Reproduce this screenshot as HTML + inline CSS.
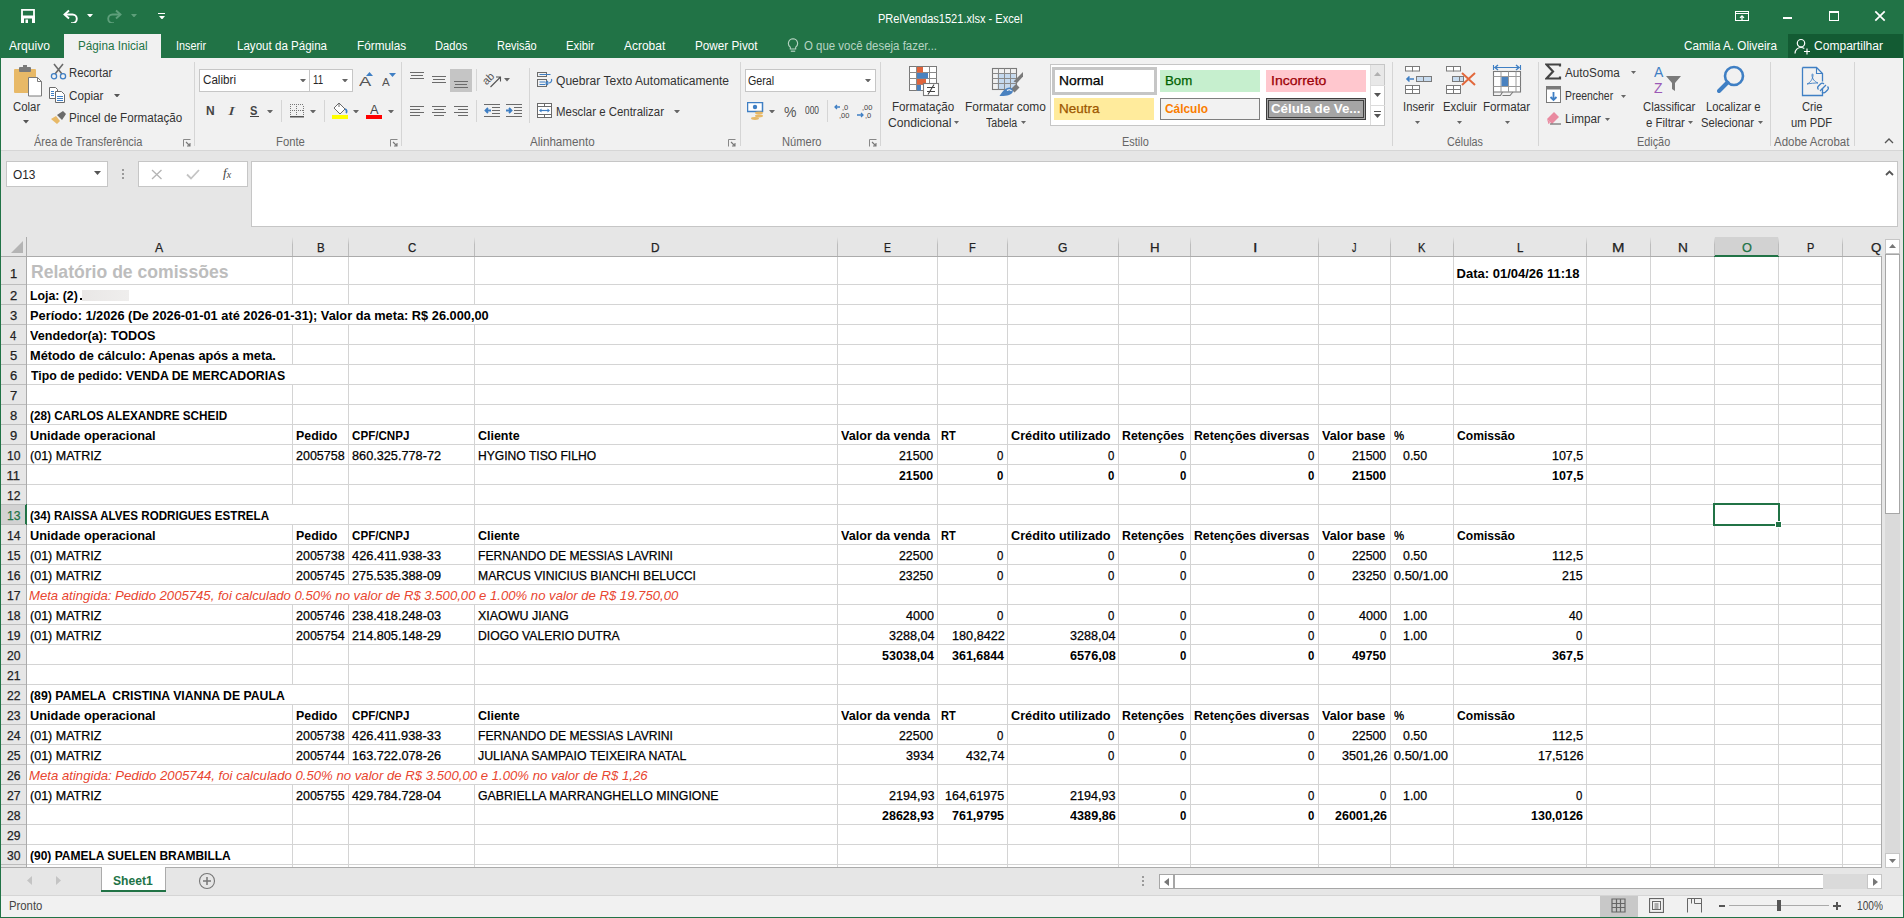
<!DOCTYPE html><html><head><meta charset="utf-8"><title>Excel</title><style>
html,body{margin:0;padding:0;width:1904px;height:918px;overflow:hidden;background:#fff;font-family:"Liberation Sans",sans-serif;}
.b{position:absolute;box-sizing:border-box;}
.t{position:absolute;white-space:pre;line-height:1;transform-origin:0 0;}
</style></head><body>
<div class="b" style="left:0px;top:0px;width:1904px;height:58px;background:#217346"></div>
<div class="t" style="left:878.00px;top:13px;font-size:12px;color:#fff;transform:scaleX(0.9210);">PRelVendas1521.xlsx - Excel</div>
<svg class="b" style="left:20px;top:8px" width="16" height="16" viewBox="0 0 16 16"><path d="M2 1.8h12v12.4H2z" fill="none" stroke="#fff" stroke-width="1.8"/><rect x="1" y="7.5" width="14" height="7.5" fill="#fff"/><rect x="4" y="10.5" width="8" height="4.5" fill="#217346"/><rect x="5.5" y="11.5" width="2.5" height="3.5" fill="#fff"/></svg>
<svg class="b" style="left:62px;top:8px" width="17" height="15" viewBox="0 0 17 15"><path d="M3.5 6.5h7a4.3 4.3 0 0 1 0 8.6H9" fill="none" stroke="#fff" stroke-width="1.9"/><path d="M7 2.5L2.5 6.5 7 10.5" fill="none" stroke="#fff" stroke-width="1.9"/></svg>
<svg class="b" style="left:86.5px;top:13.8px" width="6" height="3.5"><path d="M0 0H6L3.0 3.5z" fill="#fff"/></svg>
<svg class="b" style="left:106px;top:8px" width="17" height="15" viewBox="0 0 17 15"><path d="M13.5 6.5h-7a4.3 4.3 0 0 0 0 8.6H8" fill="none" stroke="#5e9f7b" stroke-width="1.9"/><path d="M10 2.5l4.5 4L10 10.5" fill="none" stroke="#5e9f7b" stroke-width="1.9"/></svg>
<svg class="b" style="left:130.5px;top:13.8px" width="6" height="3.5"><path d="M0 0H6L3.0 3.5z" fill="#5e9f7b"/></svg>
<div class="b" style="left:158px;top:13px;width:7px;height:1.2px;background:#fff"></div>
<svg class="b" style="left:158.5px;top:15.8px" width="6" height="3.5"><path d="M0 0H6L3.0 3.5z" fill="#fff"/></svg>
<svg class="b" style="left:1735px;top:11px" width="14" height="10" viewBox="0 0 14 10"><rect x="0.5" y="0.5" width="13" height="9" fill="none" stroke="#fff" stroke-width="1"/><path d="M0.5 2.5h13" stroke="#fff" stroke-width="1"/><path d="M7 9.5V5.2M5 6.8l2-2 2 2" fill="none" stroke="#fff" stroke-width="1.2"/></svg>
<div class="b" style="left:1783px;top:17px;width:9px;height:2px;background:#fff"></div>
<div class="b" style="left:1829px;top:11px;width:10px;height:10px;border:1px solid #fff;border-top-width:2px"></div>
<svg class="b" style="left:1874px;top:10px" width="12" height="12" viewBox="0 0 12 12"><path d="M1.3 1.3l9.4 9.4M10.7 1.3l-9.4 9.4" stroke="#fff" stroke-width="1.7"/></svg>
<div class="b" style="left:64px;top:34px;width:97px;height:24px;background:#f1f1f1"></div>
<div class="t" style="left:9.20px;top:40px;font-size:12.5px;color:#fff;transform:scaleX(0.9674);">Arquivo</div>
<div class="t" style="left:77.60px;top:40px;font-size:12.5px;color:#217346;transform:scaleX(0.9351);">Página Inicial</div>
<div class="t" style="left:176.00px;top:40px;font-size:12.5px;color:#fff;transform:scaleX(0.8657);">Inserir</div>
<div class="t" style="left:237.00px;top:40px;font-size:12.5px;color:#fff;transform:scaleX(0.9255);">Layout da Página</div>
<div class="t" style="left:357.00px;top:40px;font-size:12.5px;color:#fff;transform:scaleX(0.9423);">Fórmulas</div>
<div class="t" style="left:435.00px;top:40px;font-size:12.5px;color:#fff;transform:scaleX(0.8919);">Dados</div>
<div class="t" style="left:497.30px;top:40px;font-size:12.5px;color:#fff;transform:scaleX(0.8800);">Revisão</div>
<div class="t" style="left:565.90px;top:40px;font-size:12.5px;color:#fff;transform:scaleX(0.9062);">Exibir</div>
<div class="t" style="left:623.90px;top:40px;font-size:12.5px;color:#fff;transform:scaleX(0.9568);">Acrobat</div>
<div class="t" style="left:695.20px;top:40px;font-size:12.5px;color:#fff;transform:scaleX(0.9373);">Power Pivot</div>
<svg class="b" style="left:787px;top:38px" width="12" height="15" viewBox="0 0 12 15"><path d="M6 0.8a4.6 4.6 0 0 0-2.7 8.3V11h5.4V9.1A4.6 4.6 0 0 0 6 0.8z" fill="none" stroke="#b7d4c3" stroke-width="1.1"/><path d="M3.8 13.2h4.4" stroke="#b7d4c3" stroke-width="1.2"/></svg>
<div class="t" style="left:804.00px;top:40px;font-size:12.5px;color:#b7d4c3;transform:scaleX(0.9159);">O que você deseja fazer...</div>
<div class="t" style="left:1684.00px;top:40px;font-size:12.5px;color:#fff;transform:scaleX(0.9360);">Camila A. Oliveira</div>
<div class="b" style="left:1788px;top:34px;width:115px;height:24px;background:#135b33"></div>
<svg class="b" style="left:1794px;top:38px" width="17" height="17" viewBox="0 0 17 17"><circle cx="7" cy="5.2" r="3.7" fill="none" stroke="#fff" stroke-width="1.2"/><path d="M1 15.5c0-3.6 2.7-6 6-6 1.3 0 2.4.3 3.3.9" fill="none" stroke="#fff" stroke-width="1.2"/><path d="M13 10.5v6M10 13.5h6" stroke="#fff" stroke-width="1.2"/></svg>
<div class="t" style="left:1814.20px;top:40px;font-size:12.5px;color:#fff;transform:scaleX(0.9639);">Compartilhar</div>
<div class="b" style="left:0px;top:58px;width:1904px;height:92px;background:#f1f1f1;border-left:1px solid #217346;border-right:1px solid #217346"></div>
<div class="b" style="left:1px;top:150px;width:1902px;height:1px;background:#d6d6d6"></div>
<svg class="b" style="left:13px;top:65px" width="31" height="33" viewBox="0 0 31 33"><rect x="1" y="4" width="22" height="24" rx="1" fill="#e8b967"/><rect x="6" y="2" width="12" height="5" rx="1" fill="#7a7a7a"/><rect x="10" y="0" width="4" height="3" fill="#7a7a7a"/><path d="M15.5 12.5h9l4 4v14.5h-13z" fill="#fff" stroke="#7a7a7a" stroke-width="1"/><path d="M24.5 12.5v4h4" fill="none" stroke="#7a7a7a" stroke-width="1"/></svg>
<div class="t" style="left:12.50px;top:101px;font-size:12.5px;color:#333;transform:scaleX(0.9100);">Colar</div>
<svg class="b" style="left:22.5px;top:120.2px" width="6" height="3.5"><path d="M0 0H6L3.0 3.5z" fill="#555"/></svg>
<svg class="b" style="left:50px;top:63px" width="17" height="17" viewBox="0 0 17 17"><path d="M4 1l8 10M13 1L5 11" stroke="#6b6b6b" stroke-width="1.6"/><circle cx="4" cy="13.2" r="2.6" fill="none" stroke="#3f7fc4" stroke-width="1.3"/><circle cx="13" cy="13.2" r="2.6" fill="none" stroke="#3f7fc4" stroke-width="1.3"/></svg>
<div class="t" style="left:69.40px;top:67px;font-size:12.5px;color:#333;transform:scaleX(0.9021);">Recortar</div>
<svg class="b" style="left:49px;top:87px" width="17" height="16" viewBox="0 0 17 16"><path d="M0.5 0.5h6l2 2v9h-8z" fill="#fff" stroke="#6b6b6b" stroke-width="1"/><path d="M6.5 4.5h6l3 3v8h-9z" fill="#fff" stroke="#6b6b6b" stroke-width="1"/><rect x="2" y="4" width="3" height="1" fill="#3f7fc4"/><rect x="2" y="6" width="3" height="1" fill="#3f7fc4"/><rect x="2" y="8" width="3" height="1" fill="#3f7fc4"/><rect x="8" y="9" width="6" height="1" fill="#3f7fc4"/><rect x="8" y="11" width="6" height="1" fill="#3f7fc4"/><rect x="8" y="13" width="6" height="1" fill="#3f7fc4"/></svg>
<div class="t" style="left:69.40px;top:90px;font-size:12.5px;color:#333;transform:scaleX(0.9351);">Copiar</div>
<svg class="b" style="left:113.5px;top:93.8px" width="6" height="3.5"><path d="M0 0H6L3.0 3.5z" fill="#555"/></svg>
<svg class="b" style="left:50px;top:110px" width="17" height="15" viewBox="0 0 17 15"><path d="M1 9l5-3 4 5-3 3z" fill="#e8b967"/><path d="M7 5l6-4 3 3-4 6z" fill="#6b6b6b"/></svg>
<div class="t" style="left:69.40px;top:112px;font-size:12.5px;color:#333;transform:scaleX(0.9311);">Pincel de Formatação</div>
<div class="t" style="left:34.30px;top:136px;font-size:12.5px;color:#666;transform:scaleX(0.8815);">Área de Transferência</div>
<svg class="b" style="left:183px;top:139px" width="8" height="8" viewBox="0 0 8 8"><path d="M0.5 7.5V0.5h7" fill="none" stroke="#888" stroke-width="1"/><path d="M3 3l4 4M7 4v3H4" fill="none" stroke="#777" stroke-width="1.1"/></svg>
<div class="b" style="left:194px;top:62px;width:1px;height:84px;background:#d5d5d5"></div>
<div class="b" style="left:199px;top:69px;width:111px;height:23px;background:#fff;border:1px solid #c6c6c6"></div>
<div class="b" style="left:309px;top:69px;width:44px;height:23px;background:#fff;border:1px solid #c6c6c6"></div>
<div class="t" style="left:202.50px;top:74px;font-size:12.5px;color:#262626;transform:scaleX(0.9306);">Calibri</div>
<svg class="b" style="left:299.6px;top:78.8px" width="6" height="3.5"><path d="M0 0H6L3.0 3.5z" fill="#666"/></svg>
<div class="t" style="left:313.40px;top:74px;font-size:12.5px;color:#262626;transform:scaleX(0.7769);">11</div>
<svg class="b" style="left:342.4px;top:78.8px" width="6" height="3.5"><path d="M0 0H6L3.0 3.5z" fill="#666"/></svg>
<div class="t" style="left:359.30px;top:75px;font-size:13.01px;color:#555;transform:scaleX(1.4111);">A</div>
<svg class="b" style="left:366px;top:72px" width="7" height="4" viewBox="0 0 7 4"><path d="M0 4h7L3.5 0z" fill="#3f7fc4"/></svg>
<div class="t" style="left:382.40px;top:78px;font-size:10px;color:#555;transform:scaleX(1.1571);">A</div>
<svg class="b" style="left:389px;top:73px" width="7" height="4" viewBox="0 0 7 4"><path d="M0 0h7L3.5 4z" fill="#3f7fc4"/></svg>
<div class="t" style="left:205.60px;top:105px;font-size:12.5px;color:#444;font-weight:700;transform:scaleX(0.9556);">N</div>
<div class="t" style="left:228.00px;top:104px;font-size:13.5px;color:#444;font-style:italic;transform:scaleX(1.5000);font-family:'Liberation Serif';">I</div>
<div class="t" style="left:250.00px;top:105px;font-size:12.5px;color:#444;font-weight:700;transform:scaleX(0.8889);">S</div>
<div class="b" style="left:250px;top:116px;width:8.5px;height:1.2px;background:#444"></div>
<svg class="b" style="left:267.3px;top:109.5px" width="6" height="3.5"><path d="M0 0H6L3.0 3.5z" fill="#666"/></svg>
<div class="b" style="left:281px;top:100px;width:1px;height:22px;background:#d5d5d5"></div>
<svg class="b" style="left:290px;top:104px" width="14" height="14" viewBox="0 0 14 14"><rect x="0" y="0" width="1" height="1" fill="#777"/><rect x="0" y="6" width="1" height="1" fill="#777"/><rect x="2" y="0" width="1" height="1" fill="#777"/><rect x="2" y="6" width="1" height="1" fill="#777"/><rect x="4" y="0" width="1" height="1" fill="#777"/><rect x="4" y="6" width="1" height="1" fill="#777"/><rect x="6" y="0" width="1" height="1" fill="#777"/><rect x="6" y="6" width="1" height="1" fill="#777"/><rect x="8" y="0" width="1" height="1" fill="#777"/><rect x="8" y="6" width="1" height="1" fill="#777"/><rect x="10" y="0" width="1" height="1" fill="#777"/><rect x="10" y="6" width="1" height="1" fill="#777"/><rect x="12" y="0" width="1" height="1" fill="#777"/><rect x="12" y="6" width="1" height="1" fill="#777"/><rect x="0" y="2" width="1" height="1" fill="#777"/><rect x="0" y="4" width="1" height="1" fill="#777"/><rect x="0" y="6" width="1" height="1" fill="#777"/><rect x="0" y="8" width="1" height="1" fill="#777"/><rect x="0" y="10" width="1" height="1" fill="#777"/><rect x="6" y="2" width="1" height="1" fill="#777"/><rect x="6" y="4" width="1" height="1" fill="#777"/><rect x="6" y="6" width="1" height="1" fill="#777"/><rect x="6" y="8" width="1" height="1" fill="#777"/><rect x="6" y="10" width="1" height="1" fill="#777"/><rect x="13" y="2" width="1" height="1" fill="#777"/><rect x="13" y="4" width="1" height="1" fill="#777"/><rect x="13" y="6" width="1" height="1" fill="#777"/><rect x="13" y="8" width="1" height="1" fill="#777"/><rect x="13" y="10" width="1" height="1" fill="#777"/><rect x="0" y="12" width="14" height="1.5" fill="#555"/></svg>
<svg class="b" style="left:310.4px;top:109.5px" width="6" height="3.5"><path d="M0 0H6L3.0 3.5z" fill="#666"/></svg>
<div class="b" style="left:324px;top:100px;width:1px;height:22px;background:#d5d5d5"></div>
<svg class="b" style="left:331px;top:102px" width="17" height="13" viewBox="0 0 17 13"><path d="M3 6l5-5 6 6-5 5z" fill="#fff" stroke="#6b6b6b" stroke-width="1"/><path d="M8 1V5" stroke="#6b6b6b" stroke-width="1"/><path d="M14 7c2 1 2 3 1 4" fill="none" stroke="#3f7fc4" stroke-width="1.8"/></svg>
<div class="b" style="left:332px;top:115px;width:16px;height:4px;background:#ffff00"></div>
<svg class="b" style="left:353.4px;top:109.5px" width="6" height="3.5"><path d="M0 0H6L3.0 3.5z" fill="#666"/></svg>
<div class="t" style="left:369.70px;top:104px;font-size:12px;color:#444;transform:scaleX(1.0667);">A</div>
<div class="b" style="left:366px;top:115px;width:16px;height:4px;background:#ff0000"></div>
<svg class="b" style="left:387.5px;top:109.5px" width="6" height="3.5"><path d="M0 0H6L3.0 3.5z" fill="#666"/></svg>
<div class="t" style="left:275.50px;top:136px;font-size:12.5px;color:#666;transform:scaleX(0.9031);">Fonte</div>
<svg class="b" style="left:390px;top:139px" width="8" height="8" viewBox="0 0 8 8"><path d="M0.5 7.5V0.5h7" fill="none" stroke="#888" stroke-width="1"/><path d="M3 3l4 4M7 4v3H4" fill="none" stroke="#777" stroke-width="1.1"/></svg>
<div class="b" style="left:401px;top:62px;width:1px;height:84px;background:#d5d5d5"></div>
<svg class="b" style="left:410px;top:72px" width="14" height="7" viewBox="0 0 14 7"><rect x="0" y="0" width="14" height="1" fill="#6b6b6b"/><rect x="1" y="3" width="12" height="1" fill="#6b6b6b"/><rect x="0" y="6" width="14" height="1" fill="#6b6b6b"/></svg>
<svg class="b" style="left:432px;top:76px" width="14" height="7" viewBox="0 0 14 7"><rect x="0" y="0" width="14" height="1" fill="#6b6b6b"/><rect x="1" y="3" width="12" height="1" fill="#6b6b6b"/><rect x="0" y="6" width="14" height="1" fill="#6b6b6b"/></svg>
<div class="b" style="left:450px;top:69px;width:22px;height:23px;background:#c5c5c5"></div>
<svg class="b" style="left:454px;top:81px" width="14" height="7" viewBox="0 0 14 7"><rect x="0" y="0" width="14" height="1" fill="#6b6b6b"/><rect x="1" y="3" width="12" height="1" fill="#6b6b6b"/><rect x="0" y="6" width="14" height="1" fill="#6b6b6b"/></svg>
<div class="b" style="left:476px;top:69px;width:1px;height:22px;background:#d5d5d5"></div>
<svg class="b" style="left:483px;top:70px" width="19" height="19" viewBox="0 0 19 19"><text x="0" y="0" font-family="Liberation Sans" font-size="11" fill="#555" transform="translate(3.5 15.5) rotate(-45)">ab</text><path d="M7.5 17L17 7.5M13 7h4.5v4.5" fill="none" stroke="#555" stroke-width="1.1"/></svg>
<svg class="b" style="left:503.6px;top:78.2px" width="6" height="3.5"><path d="M0 0H6L3.0 3.5z" fill="#666"/></svg>
<div class="b" style="left:529px;top:68px;width:1px;height:55px;background:#d5d5d5"></div>
<svg class="b" style="left:537px;top:71px" width="16" height="17" viewBox="0 0 16 17"><rect x="0.5" y="1.5" width="9" height="4" fill="none" stroke="#6b6b6b"/><rect x="0.5" y="8.5" width="9" height="7" fill="none" stroke="#6b6b6b"/><path d="M2.5 3.5h11M2.5 11h6M2.5 13.5h6" stroke="#3f7fc4" stroke-width="1"/><path d="M14.5 8a3 3 0 0 1-3 4H9M11 10l-2 2 2 2" fill="none" stroke="#3f7fc4" stroke-width="1.2"/></svg>
<div class="t" style="left:556.00px;top:75px;font-size:12.5px;color:#333;transform:scaleX(0.9665);">Quebrar Texto Automaticamente</div>
<svg class="b" style="left:410px;top:106px" width="14" height="10" viewBox="0 0 14 10"><rect x="0" y="0" width="14" height="1" fill="#6b6b6b"/><rect x="0" y="3" width="10" height="1" fill="#6b6b6b"/><rect x="0" y="6" width="14" height="1" fill="#6b6b6b"/><rect x="0" y="9" width="10" height="1" fill="#6b6b6b"/></svg>
<svg class="b" style="left:432px;top:106px" width="14" height="10" viewBox="0 0 14 10"><rect x="0" y="0" width="14" height="1" fill="#6b6b6b"/><rect x="2" y="3" width="10" height="1" fill="#6b6b6b"/><rect x="0" y="6" width="14" height="1" fill="#6b6b6b"/><rect x="2" y="9" width="10" height="1" fill="#6b6b6b"/></svg>
<svg class="b" style="left:454px;top:106px" width="14" height="10" viewBox="0 0 14 10"><rect x="0" y="0" width="14" height="1" fill="#6b6b6b"/><rect x="4" y="3" width="10" height="1" fill="#6b6b6b"/><rect x="0" y="6" width="14" height="1" fill="#6b6b6b"/><rect x="4" y="9" width="10" height="1" fill="#6b6b6b"/></svg>
<div class="b" style="left:476px;top:100px;width:1px;height:22px;background:#d5d5d5"></div>
<svg class="b" style="left:484px;top:104px" width="16" height="13" viewBox="0 0 16 13"><rect x="0" y="0" width="16" height="1" fill="#6b6b6b"/><rect x="8" y="3" width="8" height="1" fill="#6b6b6b"/><rect x="8" y="6" width="8" height="1" fill="#6b6b6b"/><rect x="8" y="9" width="8" height="1" fill="#6b6b6b"/><rect x="0" y="12" width="16" height="1" fill="#6b6b6b"/><path d="M7 6.5H1.5M4 4L1.5 6.5 4 9" fill="none" stroke="#3f7fc4" stroke-width="1.8"/></svg>
<svg class="b" style="left:506px;top:104px" width="16" height="13" viewBox="0 0 16 13"><rect x="0" y="0" width="16" height="1" fill="#6b6b6b"/><rect x="8" y="3" width="8" height="1" fill="#6b6b6b"/><rect x="8" y="6" width="8" height="1" fill="#6b6b6b"/><rect x="8" y="9" width="8" height="1" fill="#6b6b6b"/><rect x="0" y="12" width="16" height="1" fill="#6b6b6b"/><path d="M0 6.5h5.5M3 4l2.5 2.5L3 9" fill="none" stroke="#3f7fc4" stroke-width="1.8"/></svg>
<svg class="b" style="left:537px;top:103px" width="15" height="15" viewBox="0 0 15 15"><rect x="0.5" y="0.5" width="14" height="14" fill="#fff" stroke="#6b6b6b"/><path d="M0.5 3.5h14M0.5 11.5h14M7.5 0.5v3M7.5 11.5v3" stroke="#6b6b6b"/><path d="M3 7.5h9" stroke="#3f7fc4" stroke-width="1.2"/><path d="M2 7.5l2.5-2v4zM13 7.5l-2.5-2v4z" fill="#3f7fc4"/></svg>
<div class="t" style="left:556.00px;top:106px;font-size:12.5px;color:#333;transform:scaleX(0.9143);">Mesclar e Centralizar</div>
<svg class="b" style="left:674.3px;top:109.5px" width="6" height="3.5"><path d="M0 0H6L3.0 3.5z" fill="#666"/></svg>
<div class="t" style="left:530.40px;top:136px;font-size:12.5px;color:#666;transform:scaleX(0.9300);">Alinhamento</div>
<svg class="b" style="left:728px;top:139px" width="8" height="8" viewBox="0 0 8 8"><path d="M0.5 7.5V0.5h7" fill="none" stroke="#888" stroke-width="1"/><path d="M3 3l4 4M7 4v3H4" fill="none" stroke="#777" stroke-width="1.1"/></svg>
<div class="b" style="left:740px;top:62px;width:1px;height:84px;background:#d5d5d5"></div>
<div class="b" style="left:745px;top:69px;width:131px;height:23px;background:#fff;border:1px solid #c6c6c6"></div>
<div class="t" style="left:748.00px;top:75px;font-size:12.5px;color:#262626;transform:scaleX(0.8548);">Geral</div>
<svg class="b" style="left:865.3px;top:78.8px" width="6" height="3.5"><path d="M0 0H6L3.0 3.5z" fill="#666"/></svg>
<svg class="b" style="left:747px;top:102px" width="18" height="18" viewBox="0 0 18 18"><rect x="0.5" y="0.5" width="15" height="9" fill="#fff" stroke="#3f7fc4" stroke-width="1.5"/><circle cx="8" cy="5" r="2.2" fill="#3f7fc4"/><ellipse cx="12" cy="11" rx="4" ry="1.4" fill="#e8b967"/><ellipse cx="12" cy="14" rx="4" ry="1.4" fill="#e8b967"/><ellipse cx="8" cy="16.5" rx="4" ry="1.4" fill="#e8b967"/></svg>
<svg class="b" style="left:769.4px;top:109.5px" width="6" height="3.5"><path d="M0 0H6L3.0 3.5z" fill="#666"/></svg>
<div class="t" style="left:784.00px;top:105px;font-size:14px;color:#555;">%</div>
<div class="t" style="left:804.80px;top:106px;font-size:10px;color:#444;transform:scaleX(0.8353);">000</div>
<div class="b" style="left:827px;top:100px;width:1px;height:22px;background:#d5d5d5"></div>
<svg class="b" style="left:834px;top:103px" width="17" height="16" viewBox="0 0 17 16"><text x="8" y="7" font-family="Liberation Sans" font-size="7.5" fill="#444">,0</text><text x="5" y="15" font-family="Liberation Sans" font-size="7.5" fill="#444">,00</text><path d="M6 4H1M3 2L1 4l2 2" fill="none" stroke="#3f7fc4" stroke-width="1.3"/></svg>
<svg class="b" style="left:856px;top:103px" width="17" height="16" viewBox="0 0 17 16"><text x="6" y="7" font-family="Liberation Sans" font-size="7.5" fill="#444">,00</text><text x="9" y="15" font-family="Liberation Sans" font-size="7.5" fill="#444">,0</text><path d="M1 12h6M5 10l2 2-2 2" fill="none" stroke="#3f7fc4" stroke-width="1.3"/></svg>
<div class="t" style="left:782.40px;top:136px;font-size:12.5px;color:#666;transform:scaleX(0.8889);">Número</div>
<svg class="b" style="left:869px;top:139px" width="8" height="8" viewBox="0 0 8 8"><path d="M0.5 7.5V0.5h7" fill="none" stroke="#888" stroke-width="1"/><path d="M3 3l4 4M7 4v3H4" fill="none" stroke="#777" stroke-width="1.1"/></svg>
<div class="b" style="left:880px;top:62px;width:1px;height:84px;background:#d5d5d5"></div>
<svg class="b" style="left:908px;top:65px" width="32" height="32" viewBox="0 0 32 32"><rect x="1.5" y="1.5" width="27" height="24" fill="#fff" stroke="#7a7a7a" stroke-width="1"/><path d="M1.5 7.5h27M1.5 13.5h27M1.5 19.5h27M8.5 1.5v24M21.5 1.5v24" stroke="#8a8a8a" stroke-width="1"/><rect x="9" y="2" width="6" height="5.5" fill="#e0643c"/><rect x="9" y="8" width="11" height="5.5" fill="#4a82c0"/><rect x="9" y="14" width="9" height="5.5" fill="#e0643c"/><rect x="9" y="20" width="4" height="5.5" fill="#4a82c0"/><rect x="15.5" y="18.5" width="15" height="12" fill="#fff" stroke="#7a7a7a" stroke-width="1.1"/><path d="M19 22.5h8M19 26.5h8M20 29.5L26 19.5" stroke="#444" stroke-width="1.1"/></svg>
<div class="t" style="left:892.20px;top:101px;font-size:12.5px;color:#333;transform:scaleX(0.9328);">Formatação</div>
<div class="t" style="left:887.50px;top:117px;font-size:12.5px;color:#333;transform:scaleX(0.9723);">Condicional</div>
<svg class="b" style="left:954.0px;top:121.0px" width="5" height="3.0"><path d="M0 0H5L2.5 3.0z" fill="#666"/></svg>
<svg class="b" style="left:991px;top:67px" width="35" height="31" viewBox="0 0 35 31"><rect x="6.5" y="6" width="18" height="16" fill="#c5d9ee"/><rect x="1.5" y="1.5" width="24" height="21" fill="none" stroke="#7a7a7a" stroke-width="1.1"/><path d="M1.5 6.5h24M1.5 11.5h24M1.5 16.5h24M7.5 1.5v21M13.5 1.5v21M19.5 1.5v21" stroke="#8a8a8a" stroke-width="1"/><path d="M20 22l5-5 3.5 3.5-5 5z" fill="#7a7a7a"/><path d="M26 16l6-6.5V5l-9.5 9.5z" fill="#7a7a7a"/><path d="M8.5 29c3-5 6-8 10-8.5 2.5 0 4 2.5 3 5-1.5 3-8 3.5-13 3.5z" fill="#4a82c0"/><path d="M16 23.5c1.5-1 3.5-1 4.5 0.5" fill="none" stroke="#fff" stroke-width="1.2"/></svg>
<div class="t" style="left:964.50px;top:101px;font-size:12.5px;color:#333;transform:scaleX(0.9541);">Formatar como</div>
<div class="t" style="left:985.50px;top:117px;font-size:12.5px;color:#333;transform:scaleX(0.8474);">Tabela</div>
<svg class="b" style="left:1021.3px;top:121.0px" width="5" height="3.0"><path d="M0 0H5L2.5 3.0z" fill="#666"/></svg>
<div class="b" style="left:1050px;top:64px;width:335px;height:62px;background:#fff;border:1px solid #c6c6c6"></div>
<div class="b" style="left:1370px;top:65px;width:14px;height:60px;background:#fff;border-left:1px solid #dcdcdc"></div>
<div class="b" style="left:1371px;top:65px;width:13px;height:20px;background:#e8e8e8"></div>
<div class="b" style="left:1370px;top:85px;width:15px;height:1px;background:#dcdcdc"></div>
<div class="b" style="left:1370px;top:105px;width:15px;height:1px;background:#dcdcdc"></div>
<svg class="b" style="left:1374px;top:72px" width="7" height="4" viewBox="0 0 7 4"><path d="M0 4h7L3.5 0z" fill="#b0b0b0"/></svg>
<svg class="b" style="left:1374px;top:93px" width="7" height="4" viewBox="0 0 7 4"><path d="M0 0h7L3.5 4z" fill="#555"/></svg>
<svg class="b" style="left:1374px;top:111px" width="7" height="7" viewBox="0 0 7 7"><path d="M0 0.5h7" stroke="#555"/><path d="M0 3h7L3.5 7z" fill="#555"/></svg>
<div class="b" style="left:1052px;top:67px;width:105px;height:28px;background:#fff;border:3px solid #c6c6c6"></div>
<div class="t" style="left:1058.70px;top:74px;font-size:13px;color:#000;-webkit-text-stroke:0.25px #000;transform:scaleX(1.0619);">Normal</div>
<div class="b" style="left:1160px;top:70px;width:100px;height:22px;background:#c6efce"></div>
<div class="t" style="left:1164.50px;top:74px;font-size:13px;color:#006100;-webkit-text-stroke:0.25px #006100;transform:scaleX(1.0185);">Bom</div>
<div class="b" style="left:1266px;top:70px;width:100px;height:22px;background:#ffc7ce"></div>
<div class="t" style="left:1270.50px;top:74px;font-size:13px;color:#9c0006;-webkit-text-stroke:0.25px #9c0006;transform:scaleX(1.0784);">Incorreto</div>
<div class="b" style="left:1054px;top:98px;width:100px;height:22px;background:#ffeb9c"></div>
<div class="t" style="left:1058.70px;top:102px;font-size:13px;color:#9c5700;-webkit-text-stroke:0.25px #9c5700;transform:scaleX(1.0375);">Neutra</div>
<div class="b" style="left:1160px;top:98px;width:100px;height:22px;background:#f2f2f2;border:1px solid #7f7f7f"></div>
<div class="t" style="left:1164.50px;top:102px;font-size:13px;color:#fa7d00;font-weight:700;transform:scaleX(0.9149);">Cálculo</div>
<div class="b" style="left:1266px;top:98px;width:100px;height:22px;background:#a5a5a5;border:3px double #3f3f3f"></div>
<div class="t" style="left:1270.50px;top:102px;font-size:13px;color:#fff;font-weight:700;transform:scaleX(1.0230);">Célula de Ve...</div>
<div class="t" style="left:1122.20px;top:136px;font-size:12.5px;color:#666;transform:scaleX(0.8742);">Estilo</div>
<div class="b" style="left:1392px;top:62px;width:1px;height:84px;background:#d5d5d5"></div>
<svg class="b" style="left:1405px;top:66px" width="28" height="29" viewBox="0 0 28 29"><g fill="#fff" stroke="#7a7a7a"><rect x="0.5" y="0.5" width="7" height="4.5"/><rect x="7.5" y="0.5" width="7" height="4.5"/><rect x="0.5" y="19.5" width="7" height="4"/><rect x="7.5" y="19.5" width="7" height="4"/><rect x="0.5" y="23.5" width="7" height="4"/><rect x="7.5" y="23.5" width="7" height="4"/></g><g fill="#c8dcf0" stroke="#7a7a7a"><rect x="11.5" y="10.5" width="7" height="5"/><rect x="18.5" y="10.5" width="8" height="5"/></g><path d="M9 13H2M4.5 10.5L2 13l2.5 2.5" fill="none" stroke="#3f7fc4" stroke-width="1.6"/></svg>
<div class="t" style="left:1402.50px;top:101px;font-size:12.5px;color:#333;transform:scaleX(0.9000);">Inserir</div>
<svg class="b" style="left:1414.9px;top:121.0px" width="5" height="3.0"><path d="M0 0H5L2.5 3.0z" fill="#666"/></svg>
<svg class="b" style="left:1446px;top:66px" width="31" height="29" viewBox="0 0 31 29"><g fill="#fff" stroke="#7a7a7a"><rect x="0.5" y="0.5" width="7" height="4.5"/><rect x="7.5" y="0.5" width="7" height="4.5"/><rect x="0.5" y="19.5" width="7" height="4"/><rect x="7.5" y="19.5" width="7" height="4"/><rect x="0.5" y="23.5" width="7" height="4"/><rect x="7.5" y="23.5" width="7" height="4"/></g><g fill="#c8dcf0" stroke="#7a7a7a"><rect x="6.5" y="10.5" width="7" height="5"/><rect x="13.5" y="10.5" width="4" height="5"/></g><path d="M16 7l13 12M29 7L16 19" stroke="#e2683c" stroke-width="2"/></svg>
<div class="t" style="left:1442.50px;top:101px;font-size:12.5px;color:#333;transform:scaleX(0.9026);">Excluir</div>
<svg class="b" style="left:1457.0px;top:121.0px" width="5" height="3.0"><path d="M0 0H5L2.5 3.0z" fill="#666"/></svg>
<svg class="b" style="left:1492px;top:64px" width="31" height="33" viewBox="0 0 31 33"><path d="M1.5 1v5M28.5 1v5M2.5 3.5h25" fill="none" stroke="#3f7fc4" stroke-width="1.1"/><path d="M6 1l-3 2.5 3 2.5M24 1l3 2.5-3 2.5" fill="none" stroke="#3f7fc4" stroke-width="1.4"/><rect x="1.5" y="7.5" width="27" height="20.5" fill="#fff" stroke="#7a7a7a" stroke-width="1.1"/><path d="M1.5 12.5h27M1.5 22.5h27M9 7.5v20.5M16.5 7.5v20.5M24 7.5v20.5" stroke="#9a9a9a" stroke-width="1"/><rect x="9.5" y="13" width="6.5" height="9" fill="#4a82c0"/><path d="M1.5 28v3.5h7l2-3.5M10.5 31.5h7.5l3-3.5" fill="none" stroke="#7a7a7a" stroke-width="1.1"/></svg>
<div class="t" style="left:1483.30px;top:101px;font-size:12.5px;color:#333;transform:scaleX(0.9314);">Formatar</div>
<svg class="b" style="left:1504.9px;top:121.0px" width="5" height="3.0"><path d="M0 0H5L2.5 3.0z" fill="#666"/></svg>
<div class="t" style="left:1447.40px;top:136px;font-size:12.5px;color:#666;transform:scaleX(0.8619);">Células</div>
<div class="b" style="left:1538px;top:62px;width:1px;height:84px;background:#d5d5d5"></div>
<svg class="b" style="left:1545px;top:63px" width="17" height="17" viewBox="0 0 17 17"><path d="M15 3.5V1.5H1.5l6.5 7-6.5 7H15v-2" fill="none" stroke="#444" stroke-width="2.2"/></svg>
<div class="t" style="left:1565.40px;top:67px;font-size:12.5px;color:#333;transform:scaleX(0.9373);">AutoSoma</div>
<svg class="b" style="left:1631.0px;top:70.5px" width="5" height="3.0"><path d="M0 0H5L2.5 3.0z" fill="#666"/></svg>
<svg class="b" style="left:1546px;top:86px" width="16" height="18" viewBox="0 0 16 18"><rect x="0.5" y="0.5" width="14" height="16" fill="#fff" stroke="#7a7a7a"/><rect x="0.5" y="0.5" width="14" height="3" fill="#7a7a7a"/><path d="M7.5 6v8M4.5 11l3 3 3-3" fill="none" stroke="#3f7fc4" stroke-width="1.8"/></svg>
<div class="t" style="left:1565.40px;top:90px;font-size:12.5px;color:#333;transform:scaleX(0.8345);">Preencher</div>
<svg class="b" style="left:1621.2px;top:94.5px" width="5" height="3.0"><path d="M0 0H5L2.5 3.0z" fill="#666"/></svg>
<svg class="b" style="left:1546px;top:110px" width="16" height="15" viewBox="0 0 16 15"><path d="M1 9l7-7 5 5-7 7z" fill="#e98aa0"/><path d="M1 9l3 3-1 2h-0.5z" fill="#e98aa0"/><path d="M4 14h11" stroke="#555" stroke-width="1"/></svg>
<div class="t" style="left:1565.40px;top:113px;font-size:12.5px;color:#333;transform:scaleX(0.9385);">Limpar</div>
<svg class="b" style="left:1605.2px;top:117.5px" width="5" height="3.0"><path d="M0 0H5L2.5 3.0z" fill="#666"/></svg>
<svg class="b" style="left:1654px;top:65px" width="31" height="30" viewBox="0 0 31 30"><text x="0" y="12" font-family="Liberation Sans" font-size="14" fill="#3f7fc4">A</text><text x="0" y="28" font-family="Liberation Sans" font-size="14" fill="#9b59b6">Z</text><path d="M12 11h15l-6 7v8l-3-2v-6z" fill="#7a7a7a"/></svg>
<div class="t" style="left:1643.30px;top:101px;font-size:12.5px;color:#333;transform:scaleX(0.9086);">Classificar</div>
<div class="t" style="left:1646.00px;top:117px;font-size:12.5px;color:#333;transform:scaleX(0.9163);">e Filtrar</div>
<svg class="b" style="left:1687.9px;top:121.0px" width="5" height="3.0"><path d="M0 0H5L2.5 3.0z" fill="#666"/></svg>
<svg class="b" style="left:1717px;top:65px" width="30" height="29" viewBox="0 0 30 29"><circle cx="17" cy="11" r="9" fill="none" stroke="#3f7fc4" stroke-width="2.6"/><path d="M10.5 17.5L2 26" stroke="#3f7fc4" stroke-width="4" stroke-linecap="round"/></svg>
<div class="t" style="left:1705.50px;top:101px;font-size:12.5px;color:#333;transform:scaleX(0.9033);">Localizar e</div>
<div class="t" style="left:1701.00px;top:117px;font-size:12.5px;color:#333;transform:scaleX(0.8967);">Selecionar</div>
<svg class="b" style="left:1758.1px;top:121.0px" width="5" height="3.0"><path d="M0 0H5L2.5 3.0z" fill="#666"/></svg>
<div class="t" style="left:1637.30px;top:136px;font-size:12.5px;color:#666;transform:scaleX(0.8684);">Edição</div>
<div class="b" style="left:1770px;top:62px;width:1px;height:84px;background:#d5d5d5"></div>
<svg class="b" style="left:1801px;top:66px" width="29" height="31" viewBox="0 0 29 31"><path d="M1.5 1.5h14l6 6v8M21.5 22v7.5h-20v-28" fill="none" stroke="#3f7fc4" stroke-width="1.3"/><path d="M15.5 1.5v6h6" fill="none" stroke="#3f7fc4" stroke-width="1.1"/><path d="M6 18c3-1 6-5 6-9 0-2-1-1-1 0 0 4 3 7 6 8-2 0-5 0-11 1z" fill="none" stroke="#3f7fc4" stroke-width="0.9"/><path d="M19 25l6-6M17.5 23.5a2.5 2.5 0 0 1 0-3.5l2-2a2.5 2.5 0 0 1 3.5 0M26.5 20.5a2.5 2.5 0 0 1 0 3.5l-2 2a2.5 2.5 0 0 1-3.5 0" fill="none" stroke="#3f7fc4" stroke-width="1.3"/></svg>
<div class="t" style="left:1802.40px;top:101px;font-size:12.5px;color:#333;transform:scaleX(0.8957);">Crie</div>
<div class="t" style="left:1791.40px;top:117px;font-size:12.5px;color:#333;transform:scaleX(0.8978);">um PDF</div>
<div class="t" style="left:1774.30px;top:136px;font-size:12.5px;color:#666;transform:scaleX(0.9193);">Adobe Acrobat</div>
<div class="b" style="left:1854px;top:62px;width:1px;height:84px;background:#d5d5d5"></div>
<svg class="b" style="left:1884px;top:138px" width="10" height="6" viewBox="0 0 10 6"><path d="M1 5l4-4 4 4" fill="none" stroke="#555" stroke-width="1.3"/></svg>
<div class="b" style="left:0px;top:151px;width:1904px;height:86px;background:#e6e6e6;border-left:1px solid #217346;border-right:1px solid #217346"></div>
<div class="b" style="left:6px;top:161px;width:102px;height:26px;background:#fff;border:1px solid #c6c6c6"></div>
<div class="t" style="left:13.20px;top:169px;font-size:12.5px;color:#262626;transform:scaleX(0.9500);">O13</div>
<svg class="b" style="left:93.9px;top:171.0px" width="7" height="4.0"><path d="M0 0H7L3.5 4.0z" fill="#555"/></svg>
<div class="b" style="left:122px;top:169px;width:2px;height:2px;background:#9a9a9a"></div>
<div class="b" style="left:122px;top:173px;width:2px;height:2px;background:#9a9a9a"></div>
<div class="b" style="left:122px;top:177px;width:2px;height:2px;background:#9a9a9a"></div>
<div class="b" style="left:138px;top:161px;width:110px;height:26px;background:#fff;border:1px solid #c6c6c6"></div>
<svg class="b" style="left:151px;top:169px" width="12" height="11" viewBox="0 0 12 11"><path d="M1 1l9.5 9M10.5 1L1 10" stroke="#b4b4b4" stroke-width="1.3"/></svg>
<svg class="b" style="left:186px;top:169px" width="14" height="11" viewBox="0 0 14 11"><path d="M1 5.5l4 4L13 1" fill="none" stroke="#c4c4c4" stroke-width="1.8"/></svg>
<div class="t" style="left:223px;top:166px;font-size:13px;font-family:'Liberation Serif';font-style:italic;color:#444">f<span style="font-size:10px;position:relative;top:1px">x</span></div>
<div class="b" style="left:251px;top:161px;width:1647px;height:66px;background:#fff;border:1px solid #c6c6c6"></div>
<svg class="b" style="left:1885px;top:170px" width="9" height="6" viewBox="0 0 9 6"><path d="M1 5l3.5-3.5L8 5" fill="none" stroke="#555" stroke-width="1.8"/></svg>
<div class="b" style="left:1px;top:237px;width:1881px;height:20px;background:#e6e6e6"></div>
<div class="b" style="left:1px;top:256px;width:1881px;height:1px;background:#ababab"></div>
<svg class="b" style="left:11px;top:241px" width="13" height="12" viewBox="0 0 13 12"><path d="M12 0V12H0z" fill="#b4b4b4"/></svg>
<div class="b" style="left:26px;top:237px;width:1px;height:630px;background:#ababab"></div>
<div class="b" style="left:1px;top:257px;width:25px;height:610px;background:#e6e6e6"></div>
<div class="b" style="left:27px;top:257px;width:1855px;height:610px;background:#fff"></div>
<div class="b" style="left:1714px;top:237px;width:64px;height:19px;background:#d2d2d2"></div>
<div class="b" style="left:1714px;top:255px;width:65px;height:2px;background:#217346"></div>
<div class="b" style="left:1px;top:505px;width:25px;height:19px;background:#d2d2d2"></div>
<div class="b" style="left:25px;top:504px;width:2px;height:21px;background:#217346"></div>
<div class="b" style="left:292px;top:237px;width:1px;height:19px;background:linear-gradient(#e6e6e6,#bcbcbc 40%)"></div>
<div class="b" style="left:348px;top:237px;width:1px;height:19px;background:linear-gradient(#e6e6e6,#bcbcbc 40%)"></div>
<div class="b" style="left:474px;top:237px;width:1px;height:19px;background:linear-gradient(#e6e6e6,#bcbcbc 40%)"></div>
<div class="b" style="left:837px;top:237px;width:1px;height:19px;background:linear-gradient(#e6e6e6,#bcbcbc 40%)"></div>
<div class="b" style="left:937px;top:237px;width:1px;height:19px;background:linear-gradient(#e6e6e6,#bcbcbc 40%)"></div>
<div class="b" style="left:1007px;top:237px;width:1px;height:19px;background:linear-gradient(#e6e6e6,#bcbcbc 40%)"></div>
<div class="b" style="left:1118px;top:237px;width:1px;height:19px;background:linear-gradient(#e6e6e6,#bcbcbc 40%)"></div>
<div class="b" style="left:1190px;top:237px;width:1px;height:19px;background:linear-gradient(#e6e6e6,#bcbcbc 40%)"></div>
<div class="b" style="left:1318px;top:237px;width:1px;height:19px;background:linear-gradient(#e6e6e6,#bcbcbc 40%)"></div>
<div class="b" style="left:1390px;top:237px;width:1px;height:19px;background:linear-gradient(#e6e6e6,#bcbcbc 40%)"></div>
<div class="b" style="left:1453px;top:237px;width:1px;height:19px;background:linear-gradient(#e6e6e6,#bcbcbc 40%)"></div>
<div class="b" style="left:1586px;top:237px;width:1px;height:19px;background:linear-gradient(#e6e6e6,#bcbcbc 40%)"></div>
<div class="b" style="left:1650px;top:237px;width:1px;height:19px;background:linear-gradient(#e6e6e6,#bcbcbc 40%)"></div>
<div class="b" style="left:1714px;top:237px;width:1px;height:19px;background:linear-gradient(#e6e6e6,#bcbcbc 40%)"></div>
<div class="b" style="left:1778px;top:237px;width:1px;height:19px;background:linear-gradient(#e6e6e6,#bcbcbc 40%)"></div>
<div class="b" style="left:1842px;top:237px;width:1px;height:19px;background:linear-gradient(#e6e6e6,#bcbcbc 40%)"></div>
<div class="b" style="left:27px;top:284px;width:1855px;height:1px;background:#d4d4d4"></div>
<div class="b" style="left:1px;top:284px;width:25px;height:1px;background:#bcbcbc"></div>
<div class="b" style="left:27px;top:304px;width:1855px;height:1px;background:#d4d4d4"></div>
<div class="b" style="left:1px;top:304px;width:25px;height:1px;background:#bcbcbc"></div>
<div class="b" style="left:27px;top:324px;width:1855px;height:1px;background:#d4d4d4"></div>
<div class="b" style="left:1px;top:324px;width:25px;height:1px;background:#bcbcbc"></div>
<div class="b" style="left:27px;top:344px;width:1855px;height:1px;background:#d4d4d4"></div>
<div class="b" style="left:1px;top:344px;width:25px;height:1px;background:#bcbcbc"></div>
<div class="b" style="left:27px;top:364px;width:1855px;height:1px;background:#d4d4d4"></div>
<div class="b" style="left:1px;top:364px;width:25px;height:1px;background:#bcbcbc"></div>
<div class="b" style="left:27px;top:384px;width:1855px;height:1px;background:#d4d4d4"></div>
<div class="b" style="left:1px;top:384px;width:25px;height:1px;background:#bcbcbc"></div>
<div class="b" style="left:27px;top:404px;width:1855px;height:1px;background:#d4d4d4"></div>
<div class="b" style="left:1px;top:404px;width:25px;height:1px;background:#bcbcbc"></div>
<div class="b" style="left:27px;top:424px;width:1855px;height:1px;background:#d4d4d4"></div>
<div class="b" style="left:1px;top:424px;width:25px;height:1px;background:#bcbcbc"></div>
<div class="b" style="left:27px;top:444px;width:1855px;height:1px;background:#d4d4d4"></div>
<div class="b" style="left:1px;top:444px;width:25px;height:1px;background:#bcbcbc"></div>
<div class="b" style="left:27px;top:464px;width:1855px;height:1px;background:#d4d4d4"></div>
<div class="b" style="left:1px;top:464px;width:25px;height:1px;background:#bcbcbc"></div>
<div class="b" style="left:27px;top:484px;width:1855px;height:1px;background:#d4d4d4"></div>
<div class="b" style="left:1px;top:484px;width:25px;height:1px;background:#bcbcbc"></div>
<div class="b" style="left:27px;top:504px;width:1855px;height:1px;background:#d4d4d4"></div>
<div class="b" style="left:1px;top:504px;width:25px;height:1px;background:#bcbcbc"></div>
<div class="b" style="left:27px;top:524px;width:1855px;height:1px;background:#d4d4d4"></div>
<div class="b" style="left:1px;top:524px;width:25px;height:1px;background:#bcbcbc"></div>
<div class="b" style="left:27px;top:544px;width:1855px;height:1px;background:#d4d4d4"></div>
<div class="b" style="left:1px;top:544px;width:25px;height:1px;background:#bcbcbc"></div>
<div class="b" style="left:27px;top:564px;width:1855px;height:1px;background:#d4d4d4"></div>
<div class="b" style="left:1px;top:564px;width:25px;height:1px;background:#bcbcbc"></div>
<div class="b" style="left:27px;top:584px;width:1855px;height:1px;background:#d4d4d4"></div>
<div class="b" style="left:1px;top:584px;width:25px;height:1px;background:#bcbcbc"></div>
<div class="b" style="left:27px;top:604px;width:1855px;height:1px;background:#d4d4d4"></div>
<div class="b" style="left:1px;top:604px;width:25px;height:1px;background:#bcbcbc"></div>
<div class="b" style="left:27px;top:624px;width:1855px;height:1px;background:#d4d4d4"></div>
<div class="b" style="left:1px;top:624px;width:25px;height:1px;background:#bcbcbc"></div>
<div class="b" style="left:27px;top:644px;width:1855px;height:1px;background:#d4d4d4"></div>
<div class="b" style="left:1px;top:644px;width:25px;height:1px;background:#bcbcbc"></div>
<div class="b" style="left:27px;top:664px;width:1855px;height:1px;background:#d4d4d4"></div>
<div class="b" style="left:1px;top:664px;width:25px;height:1px;background:#bcbcbc"></div>
<div class="b" style="left:27px;top:684px;width:1855px;height:1px;background:#d4d4d4"></div>
<div class="b" style="left:1px;top:684px;width:25px;height:1px;background:#bcbcbc"></div>
<div class="b" style="left:27px;top:704px;width:1855px;height:1px;background:#d4d4d4"></div>
<div class="b" style="left:1px;top:704px;width:25px;height:1px;background:#bcbcbc"></div>
<div class="b" style="left:27px;top:724px;width:1855px;height:1px;background:#d4d4d4"></div>
<div class="b" style="left:1px;top:724px;width:25px;height:1px;background:#bcbcbc"></div>
<div class="b" style="left:27px;top:744px;width:1855px;height:1px;background:#d4d4d4"></div>
<div class="b" style="left:1px;top:744px;width:25px;height:1px;background:#bcbcbc"></div>
<div class="b" style="left:27px;top:764px;width:1855px;height:1px;background:#d4d4d4"></div>
<div class="b" style="left:1px;top:764px;width:25px;height:1px;background:#bcbcbc"></div>
<div class="b" style="left:27px;top:784px;width:1855px;height:1px;background:#d4d4d4"></div>
<div class="b" style="left:1px;top:784px;width:25px;height:1px;background:#bcbcbc"></div>
<div class="b" style="left:27px;top:804px;width:1855px;height:1px;background:#d4d4d4"></div>
<div class="b" style="left:1px;top:804px;width:25px;height:1px;background:#bcbcbc"></div>
<div class="b" style="left:27px;top:824px;width:1855px;height:1px;background:#d4d4d4"></div>
<div class="b" style="left:1px;top:824px;width:25px;height:1px;background:#bcbcbc"></div>
<div class="b" style="left:27px;top:844px;width:1855px;height:1px;background:#d4d4d4"></div>
<div class="b" style="left:1px;top:844px;width:25px;height:1px;background:#bcbcbc"></div>
<div class="b" style="left:27px;top:864px;width:1855px;height:1px;background:#d4d4d4"></div>
<div class="b" style="left:1px;top:864px;width:25px;height:1px;background:#bcbcbc"></div>
<div class="b" style="left:292px;top:257px;width:1px;height:48px;background:#d4d4d4"></div>
<div class="b" style="left:292px;top:324px;width:1px;height:41px;background:#d4d4d4"></div>
<div class="b" style="left:292px;top:384px;width:1px;height:121px;background:#d4d4d4"></div>
<div class="b" style="left:292px;top:524px;width:1px;height:61px;background:#d4d4d4"></div>
<div class="b" style="left:292px;top:604px;width:1px;height:81px;background:#d4d4d4"></div>
<div class="b" style="left:292px;top:704px;width:1px;height:61px;background:#d4d4d4"></div>
<div class="b" style="left:292px;top:784px;width:1px;height:83px;background:#d4d4d4"></div>
<div class="b" style="left:348px;top:257px;width:1px;height:48px;background:#d4d4d4"></div>
<div class="b" style="left:348px;top:324px;width:1px;height:261px;background:#d4d4d4"></div>
<div class="b" style="left:348px;top:604px;width:1px;height:161px;background:#d4d4d4"></div>
<div class="b" style="left:348px;top:784px;width:1px;height:83px;background:#d4d4d4"></div>
<div class="b" style="left:474px;top:257px;width:1px;height:48px;background:#d4d4d4"></div>
<div class="b" style="left:474px;top:324px;width:1px;height:261px;background:#d4d4d4"></div>
<div class="b" style="left:474px;top:604px;width:1px;height:161px;background:#d4d4d4"></div>
<div class="b" style="left:474px;top:784px;width:1px;height:83px;background:#d4d4d4"></div>
<div class="b" style="left:837px;top:257px;width:1px;height:610px;background:#d4d4d4"></div>
<div class="b" style="left:937px;top:257px;width:1px;height:610px;background:#d4d4d4"></div>
<div class="b" style="left:1007px;top:257px;width:1px;height:610px;background:#d4d4d4"></div>
<div class="b" style="left:1118px;top:257px;width:1px;height:610px;background:#d4d4d4"></div>
<div class="b" style="left:1190px;top:257px;width:1px;height:610px;background:#d4d4d4"></div>
<div class="b" style="left:1318px;top:257px;width:1px;height:610px;background:#d4d4d4"></div>
<div class="b" style="left:1390px;top:257px;width:1px;height:610px;background:#d4d4d4"></div>
<div class="b" style="left:1453px;top:257px;width:1px;height:610px;background:#d4d4d4"></div>
<div class="b" style="left:1586px;top:257px;width:1px;height:610px;background:#d4d4d4"></div>
<div class="b" style="left:1650px;top:257px;width:1px;height:610px;background:#d4d4d4"></div>
<div class="b" style="left:1714px;top:257px;width:1px;height:610px;background:#d4d4d4"></div>
<div class="b" style="left:1778px;top:257px;width:1px;height:610px;background:#d4d4d4"></div>
<div class="b" style="left:1842px;top:257px;width:1px;height:610px;background:#d4d4d4"></div>
<div class="t" style="left:155.25px;top:241px;font-size:13px;color:#222;-webkit-text-stroke:0.25px #222;transform:scaleX(0.9446);">A</div>
<div class="t" style="left:316.50px;top:241px;font-size:13px;color:#222;-webkit-text-stroke:0.25px #222;transform:scaleX(0.8884);">B</div>
<div class="t" style="left:407.55px;top:241px;font-size:13px;color:#222;-webkit-text-stroke:0.25px #222;transform:scaleX(0.8770);">C</div>
<div class="t" style="left:651.45px;top:241px;font-size:13px;color:#222;-webkit-text-stroke:0.25px #222;transform:scaleX(0.9108);">D</div>
<div class="t" style="left:883.91px;top:241px;font-size:13px;color:#222;-webkit-text-stroke:0.25px #222;transform:scaleX(0.7984);">E</div>
<div class="t" style="left:969.11px;top:241px;font-size:13px;color:#222;-webkit-text-stroke:0.25px #222;transform:scaleX(0.8476);">F</div>
<div class="t" style="left:1058.34px;top:241px;font-size:13px;color:#222;-webkit-text-stroke:0.25px #222;transform:scaleX(0.9311);">G</div>
<div class="t" style="left:1149.90px;top:241px;font-size:13px;color:#222;-webkit-text-stroke:0.25px #222;transform:scaleX(1.0232);">H</div>
<div class="t" style="left:1252.63px;top:241px;font-size:13px;color:#222;-webkit-text-stroke:0.25px #222;transform:scaleX(1.2480);">I</div>
<div class="t" style="left:1352.12px;top:241px;font-size:13px;color:#222;-webkit-text-stroke:0.25px #222;transform:scaleX(0.6794);">J</div>
<div class="t" style="left:1418.15px;top:241px;font-size:13px;color:#222;-webkit-text-stroke:0.25px #222;transform:scaleX(0.8546);">K</div>
<div class="t" style="left:1516.91px;top:241px;font-size:13px;color:#222;-webkit-text-stroke:0.25px #222;transform:scaleX(0.8820);">L</div>
<div class="t" style="left:1612.18px;top:241px;font-size:13px;color:#222;-webkit-text-stroke:0.25px #222;transform:scaleX(1.1500);">M</div>
<div class="t" style="left:1677.74px;top:241px;font-size:13px;color:#222;-webkit-text-stroke:0.25px #222;transform:scaleX(1.0570);">N</div>
<div class="t" style="left:1741.59px;top:241px;font-size:13px;color:#217346;-webkit-text-stroke:0.25px #217346;transform:scaleX(0.9816);">O</div>
<div class="t" style="left:1806.70px;top:241px;font-size:13px;color:#222;-webkit-text-stroke:0.25px #222;transform:scaleX(0.8434);">P</div>
<div class="t" style="left:1870.89px;top:241px;font-size:13px;color:#222;-webkit-text-stroke:0.25px #222;transform:scaleX(1.0218);">Q</div>
<div class="t" style="left:10.00px;top:267px;font-size:13px;color:#222;-webkit-text-stroke:0.25px #222;">1</div>
<div class="t" style="left:10.00px;top:289px;font-size:13px;color:#222;-webkit-text-stroke:0.25px #222;">2</div>
<div class="t" style="left:10.00px;top:309px;font-size:13px;color:#222;-webkit-text-stroke:0.25px #222;">3</div>
<div class="t" style="left:10.00px;top:329px;font-size:13px;color:#222;-webkit-text-stroke:0.25px #222;transform:scaleX(0.8750);">4</div>
<div class="t" style="left:10.00px;top:349px;font-size:13px;color:#222;-webkit-text-stroke:0.25px #222;">5</div>
<div class="t" style="left:10.00px;top:369px;font-size:13px;color:#222;-webkit-text-stroke:0.25px #222;">6</div>
<div class="t" style="left:10.00px;top:389px;font-size:13px;color:#222;-webkit-text-stroke:0.25px #222;">7</div>
<div class="t" style="left:10.00px;top:409px;font-size:13px;color:#222;-webkit-text-stroke:0.25px #222;">8</div>
<div class="t" style="left:10.00px;top:429px;font-size:13px;color:#222;-webkit-text-stroke:0.25px #222;">9</div>
<div class="t" style="left:6.50px;top:449px;font-size:13px;color:#222;-webkit-text-stroke:0.25px #222;transform:scaleX(0.9333);">10</div>
<div class="t" style="left:6.50px;top:469px;font-size:13px;color:#222;-webkit-text-stroke:0.25px #222;">11</div>
<div class="t" style="left:6.50px;top:489px;font-size:13px;color:#222;-webkit-text-stroke:0.25px #222;transform:scaleX(0.9333);">12</div>
<div class="t" style="left:6.50px;top:509px;font-size:13px;color:#217346;-webkit-text-stroke:0.25px #217346;transform:scaleX(0.9333);">13</div>
<div class="t" style="left:6.50px;top:529px;font-size:13px;color:#222;-webkit-text-stroke:0.25px #222;transform:scaleX(0.9333);">14</div>
<div class="t" style="left:6.50px;top:549px;font-size:13px;color:#222;-webkit-text-stroke:0.25px #222;transform:scaleX(0.9333);">15</div>
<div class="t" style="left:6.50px;top:569px;font-size:13px;color:#222;-webkit-text-stroke:0.25px #222;transform:scaleX(0.9333);">16</div>
<div class="t" style="left:6.50px;top:589px;font-size:13px;color:#222;-webkit-text-stroke:0.25px #222;transform:scaleX(0.9333);">17</div>
<div class="t" style="left:6.50px;top:609px;font-size:13px;color:#222;-webkit-text-stroke:0.25px #222;transform:scaleX(0.9333);">18</div>
<div class="t" style="left:6.50px;top:629px;font-size:13px;color:#222;-webkit-text-stroke:0.25px #222;transform:scaleX(0.9333);">19</div>
<div class="t" style="left:6.50px;top:649px;font-size:13px;color:#222;-webkit-text-stroke:0.25px #222;transform:scaleX(0.9333);">20</div>
<div class="t" style="left:6.50px;top:669px;font-size:13px;color:#222;-webkit-text-stroke:0.25px #222;transform:scaleX(0.9333);">21</div>
<div class="t" style="left:6.50px;top:689px;font-size:13px;color:#222;-webkit-text-stroke:0.25px #222;transform:scaleX(0.9333);">22</div>
<div class="t" style="left:6.50px;top:709px;font-size:13px;color:#222;-webkit-text-stroke:0.25px #222;transform:scaleX(0.9333);">23</div>
<div class="t" style="left:6.50px;top:729px;font-size:13px;color:#222;-webkit-text-stroke:0.25px #222;transform:scaleX(0.9333);">24</div>
<div class="t" style="left:6.50px;top:749px;font-size:13px;color:#222;-webkit-text-stroke:0.25px #222;transform:scaleX(0.9333);">25</div>
<div class="t" style="left:6.50px;top:769px;font-size:13px;color:#222;-webkit-text-stroke:0.25px #222;transform:scaleX(0.9333);">26</div>
<div class="t" style="left:6.50px;top:789px;font-size:13px;color:#222;-webkit-text-stroke:0.25px #222;transform:scaleX(0.9333);">27</div>
<div class="t" style="left:6.50px;top:809px;font-size:13px;color:#222;-webkit-text-stroke:0.25px #222;transform:scaleX(0.9333);">28</div>
<div class="t" style="left:6.50px;top:829px;font-size:13px;color:#222;-webkit-text-stroke:0.25px #222;transform:scaleX(0.9333);">29</div>
<div class="t" style="left:6.50px;top:849px;font-size:13px;color:#222;-webkit-text-stroke:0.25px #222;transform:scaleX(0.9333);">30</div>
<div class="t" style="left:31.10px;top:263px;font-size:18.2px;color:#bdbdbd;font-weight:700;transform:scaleX(0.9672);">Relatório de comissões</div>
<div class="t" style="left:1456.60px;top:267px;font-size:13px;color:#000;font-weight:700;">Data: 01/04/26 11:18</div>
<div class="t" style="left:29.80px;top:289px;font-size:13px;color:#000;font-weight:700;transform:scaleX(0.9451);">Loja: (2)</div>
<div class="t" style="left:29.80px;top:309px;font-size:13px;color:#000;font-weight:700;transform:scaleX(0.9841);">Período: 1/2026 (De 2026-01-01 até 2026-01-31); Valor da meta: R$ 26.000,00</div>
<div class="t" style="left:29.80px;top:329px;font-size:13px;color:#000;font-weight:700;transform:scaleX(0.9721);">Vendedor(a): TODOS</div>
<div class="t" style="left:29.80px;top:349px;font-size:13px;color:#000;font-weight:700;transform:scaleX(0.9824);">Método de cálculo: Apenas após a meta.</div>
<div class="t" style="left:30.75px;top:369px;font-size:13px;color:#000;font-weight:700;transform:scaleX(0.9459);">Tipo de pedido: VENDA DE MERCADORIAS</div>
<div class="t" style="left:29.80px;top:409px;font-size:13px;color:#000;font-weight:700;transform:scaleX(0.9027);">(28) CARLOS ALEXANDRE SCHEID</div>
<div class="t" style="left:29.80px;top:429px;font-size:13px;color:#000;font-weight:700;transform:scaleX(0.9828);">Unidade operacional</div>
<div class="t" style="left:295.80px;top:429px;font-size:13px;color:#000;font-weight:700;transform:scaleX(0.9545);">Pedido</div>
<div class="t" style="left:351.80px;top:429px;font-size:13px;color:#000;font-weight:700;transform:scaleX(0.8937);">CPF/CNPJ</div>
<div class="t" style="left:477.80px;top:429px;font-size:13px;color:#000;font-weight:700;transform:scaleX(0.9591);">Cliente</div>
<div class="t" style="left:840.80px;top:429px;font-size:13px;color:#000;font-weight:700;transform:scaleX(0.9710);">Valor da venda</div>
<div class="t" style="left:940.80px;top:429px;font-size:13px;color:#000;font-weight:700;transform:scaleX(0.8500);">RT</div>
<div class="t" style="left:1010.80px;top:429px;font-size:13px;color:#000;font-weight:700;transform:scaleX(0.9775);">Crédito utilizado</div>
<div class="t" style="left:1121.80px;top:429px;font-size:13px;color:#000;font-weight:700;transform:scaleX(0.9455);">Retenções</div>
<div class="t" style="left:1193.80px;top:429px;font-size:13px;color:#000;font-weight:700;transform:scaleX(0.9434);">Retenções diversas</div>
<div class="t" style="left:1321.80px;top:429px;font-size:13px;color:#000;font-weight:700;transform:scaleX(0.9723);">Valor base</div>
<div class="t" style="left:1393.80px;top:429px;font-size:13px;color:#000;font-weight:700;transform:scaleX(0.8833);">%</div>
<div class="t" style="left:1456.80px;top:429px;font-size:13px;color:#000;font-weight:700;transform:scaleX(0.9306);">Comissão</div>
<div class="t" style="left:29.80px;top:449px;font-size:13px;color:#000;-webkit-text-stroke:0.25px #000;transform:scaleX(0.9627);">(01) MATRIZ</div>
<div class="t" style="left:296.40px;top:449px;font-size:13px;color:#000;-webkit-text-stroke:0.25px #000;transform:scaleX(0.9608);">2005758</div>
<div class="t" style="left:351.80px;top:449px;font-size:13px;color:#000;-webkit-text-stroke:0.25px #000;transform:scaleX(0.9774);">860.325.778-72</div>
<div class="t" style="left:477.80px;top:449px;font-size:13px;color:#000;-webkit-text-stroke:0.25px #000;transform:scaleX(0.9308);">HYGINO TISO FILHO</div>
<div class="t" style="left:899.40px;top:449px;font-size:13px;color:#000;-webkit-text-stroke:0.25px #000;transform:scaleX(0.9459);">21500</div>
<div class="t" style="left:997.40px;top:449px;font-size:13px;color:#000;-webkit-text-stroke:0.25px #000;transform:scaleX(0.8750);">0</div>
<div class="t" style="left:1108.40px;top:449px;font-size:13px;color:#000;-webkit-text-stroke:0.25px #000;transform:scaleX(0.8750);">0</div>
<div class="t" style="left:1180.40px;top:449px;font-size:13px;color:#000;-webkit-text-stroke:0.25px #000;transform:scaleX(0.8750);">0</div>
<div class="t" style="left:1308.40px;top:449px;font-size:13px;color:#000;-webkit-text-stroke:0.25px #000;transform:scaleX(0.8750);">0</div>
<div class="t" style="left:1352.40px;top:449px;font-size:13px;color:#000;-webkit-text-stroke:0.25px #000;transform:scaleX(0.9459);">21500</div>
<div class="t" style="left:1402.50px;top:449px;font-size:13px;color:#000;-webkit-text-stroke:0.25px #000;transform:scaleX(0.9517);">0.50</div>
<div class="t" style="left:1551.76px;top:449px;font-size:13px;color:#000;-webkit-text-stroke:0.25px #000;transform:scaleX(0.9589);">107,5</div>
<div class="t" style="left:899.40px;top:469px;font-size:13px;color:#000;font-weight:700;transform:scaleX(0.9459);">21500</div>
<div class="t" style="left:997.40px;top:469px;font-size:13px;color:#000;font-weight:700;transform:scaleX(0.8750);">0</div>
<div class="t" style="left:1108.40px;top:469px;font-size:13px;color:#000;font-weight:700;transform:scaleX(0.8750);">0</div>
<div class="t" style="left:1180.40px;top:469px;font-size:13px;color:#000;font-weight:700;transform:scaleX(0.8750);">0</div>
<div class="t" style="left:1308.40px;top:469px;font-size:13px;color:#000;font-weight:700;transform:scaleX(0.8750);">0</div>
<div class="t" style="left:1352.40px;top:469px;font-size:13px;color:#000;font-weight:700;transform:scaleX(0.9459);">21500</div>
<div class="t" style="left:1551.60px;top:469px;font-size:13px;color:#000;font-weight:700;transform:scaleX(0.9636);">107,5</div>
<div class="t" style="left:29.80px;top:509px;font-size:13px;color:#000;font-weight:700;transform:scaleX(0.8937);">(34) RAISSA ALVES RODRIGUES ESTRELA</div>
<div class="t" style="left:29.80px;top:529px;font-size:13px;color:#000;font-weight:700;transform:scaleX(0.9828);">Unidade operacional</div>
<div class="t" style="left:295.80px;top:529px;font-size:13px;color:#000;font-weight:700;transform:scaleX(0.9545);">Pedido</div>
<div class="t" style="left:351.80px;top:529px;font-size:13px;color:#000;font-weight:700;transform:scaleX(0.8937);">CPF/CNPJ</div>
<div class="t" style="left:477.80px;top:529px;font-size:13px;color:#000;font-weight:700;transform:scaleX(0.9591);">Cliente</div>
<div class="t" style="left:840.80px;top:529px;font-size:13px;color:#000;font-weight:700;transform:scaleX(0.9710);">Valor da venda</div>
<div class="t" style="left:940.80px;top:529px;font-size:13px;color:#000;font-weight:700;transform:scaleX(0.8500);">RT</div>
<div class="t" style="left:1010.80px;top:529px;font-size:13px;color:#000;font-weight:700;transform:scaleX(0.9775);">Crédito utilizado</div>
<div class="t" style="left:1121.80px;top:529px;font-size:13px;color:#000;font-weight:700;transform:scaleX(0.9455);">Retenções</div>
<div class="t" style="left:1193.80px;top:529px;font-size:13px;color:#000;font-weight:700;transform:scaleX(0.9434);">Retenções diversas</div>
<div class="t" style="left:1321.80px;top:529px;font-size:13px;color:#000;font-weight:700;transform:scaleX(0.9723);">Valor base</div>
<div class="t" style="left:1393.80px;top:529px;font-size:13px;color:#000;font-weight:700;transform:scaleX(0.8833);">%</div>
<div class="t" style="left:1456.80px;top:529px;font-size:13px;color:#000;font-weight:700;transform:scaleX(0.9306);">Comissão</div>
<div class="t" style="left:29.80px;top:549px;font-size:13px;color:#000;-webkit-text-stroke:0.25px #000;transform:scaleX(0.9627);">(01) MATRIZ</div>
<div class="t" style="left:296.40px;top:549px;font-size:13px;color:#000;-webkit-text-stroke:0.25px #000;transform:scaleX(0.9608);">2005738</div>
<div class="t" style="left:351.80px;top:549px;font-size:13px;color:#000;-webkit-text-stroke:0.25px #000;transform:scaleX(0.9882);">426.411.938-33</div>
<div class="t" style="left:477.80px;top:549px;font-size:13px;color:#000;-webkit-text-stroke:0.25px #000;transform:scaleX(0.9317);">FERNANDO DE MESSIAS LAVRINI</div>
<div class="t" style="left:899.40px;top:549px;font-size:13px;color:#000;-webkit-text-stroke:0.25px #000;transform:scaleX(0.9459);">22500</div>
<div class="t" style="left:997.40px;top:549px;font-size:13px;color:#000;-webkit-text-stroke:0.25px #000;transform:scaleX(0.8750);">0</div>
<div class="t" style="left:1108.40px;top:549px;font-size:13px;color:#000;-webkit-text-stroke:0.25px #000;transform:scaleX(0.8750);">0</div>
<div class="t" style="left:1180.40px;top:549px;font-size:13px;color:#000;-webkit-text-stroke:0.25px #000;transform:scaleX(0.8750);">0</div>
<div class="t" style="left:1308.40px;top:549px;font-size:13px;color:#000;-webkit-text-stroke:0.25px #000;transform:scaleX(0.8750);">0</div>
<div class="t" style="left:1352.40px;top:549px;font-size:13px;color:#000;-webkit-text-stroke:0.25px #000;transform:scaleX(0.9459);">22500</div>
<div class="t" style="left:1402.50px;top:549px;font-size:13px;color:#000;-webkit-text-stroke:0.25px #000;transform:scaleX(0.9517);">0.50</div>
<div class="t" style="left:1551.76px;top:549px;font-size:13px;color:#000;-webkit-text-stroke:0.25px #000;transform:scaleX(0.9889);">112,5</div>
<div class="t" style="left:29.80px;top:569px;font-size:13px;color:#000;-webkit-text-stroke:0.25px #000;transform:scaleX(0.9627);">(01) MATRIZ</div>
<div class="t" style="left:296.40px;top:569px;font-size:13px;color:#000;-webkit-text-stroke:0.25px #000;transform:scaleX(0.9608);">2005745</div>
<div class="t" style="left:351.80px;top:569px;font-size:13px;color:#000;-webkit-text-stroke:0.25px #000;transform:scaleX(0.9774);">275.535.388-09</div>
<div class="t" style="left:477.80px;top:569px;font-size:13px;color:#000;-webkit-text-stroke:0.25px #000;transform:scaleX(0.9366);">MARCUS VINICIUS BIANCHI BELUCCI</div>
<div class="t" style="left:899.40px;top:569px;font-size:13px;color:#000;-webkit-text-stroke:0.25px #000;transform:scaleX(0.9459);">23250</div>
<div class="t" style="left:997.40px;top:569px;font-size:13px;color:#000;-webkit-text-stroke:0.25px #000;transform:scaleX(0.8750);">0</div>
<div class="t" style="left:1108.40px;top:569px;font-size:13px;color:#000;-webkit-text-stroke:0.25px #000;transform:scaleX(0.8750);">0</div>
<div class="t" style="left:1180.40px;top:569px;font-size:13px;color:#000;-webkit-text-stroke:0.25px #000;transform:scaleX(0.8750);">0</div>
<div class="t" style="left:1308.40px;top:569px;font-size:13px;color:#000;-webkit-text-stroke:0.25px #000;transform:scaleX(0.8750);">0</div>
<div class="t" style="left:1352.40px;top:569px;font-size:13px;color:#000;-webkit-text-stroke:0.25px #000;transform:scaleX(0.9459);">23250</div>
<div class="t" style="left:1393.80px;top:569px;font-size:13px;color:#000;-webkit-text-stroke:0.25px #000;">0.50/1.00</div>
<div class="t" style="left:1562.40px;top:569px;font-size:13px;color:#000;-webkit-text-stroke:0.25px #000;transform:scaleX(0.9545);">215</div>
<div class="t" style="left:29.80px;top:609px;font-size:13px;color:#000;-webkit-text-stroke:0.25px #000;transform:scaleX(0.9627);">(01) MATRIZ</div>
<div class="t" style="left:296.40px;top:609px;font-size:13px;color:#000;-webkit-text-stroke:0.25px #000;transform:scaleX(0.9608);">2005746</div>
<div class="t" style="left:351.80px;top:609px;font-size:13px;color:#000;-webkit-text-stroke:0.25px #000;transform:scaleX(0.9774);">238.418.248-03</div>
<div class="t" style="left:477.80px;top:609px;font-size:13px;color:#000;-webkit-text-stroke:0.25px #000;transform:scaleX(0.9598);">XIAOWU JIANG</div>
<div class="t" style="left:906.40px;top:609px;font-size:13px;color:#000;-webkit-text-stroke:0.25px #000;transform:scaleX(0.9655);">4000</div>
<div class="t" style="left:997.40px;top:609px;font-size:13px;color:#000;-webkit-text-stroke:0.25px #000;transform:scaleX(0.8750);">0</div>
<div class="t" style="left:1108.40px;top:609px;font-size:13px;color:#000;-webkit-text-stroke:0.25px #000;transform:scaleX(0.8750);">0</div>
<div class="t" style="left:1180.40px;top:609px;font-size:13px;color:#000;-webkit-text-stroke:0.25px #000;transform:scaleX(0.8750);">0</div>
<div class="t" style="left:1308.40px;top:609px;font-size:13px;color:#000;-webkit-text-stroke:0.25px #000;transform:scaleX(0.8750);">0</div>
<div class="t" style="left:1359.40px;top:609px;font-size:13px;color:#000;-webkit-text-stroke:0.25px #000;transform:scaleX(0.9655);">4000</div>
<div class="t" style="left:1402.50px;top:609px;font-size:13px;color:#000;-webkit-text-stroke:0.25px #000;transform:scaleX(0.9517);">1.00</div>
<div class="t" style="left:1569.40px;top:609px;font-size:13px;color:#000;-webkit-text-stroke:0.25px #000;transform:scaleX(0.9333);">40</div>
<div class="t" style="left:29.80px;top:629px;font-size:13px;color:#000;-webkit-text-stroke:0.25px #000;transform:scaleX(0.9627);">(01) MATRIZ</div>
<div class="t" style="left:296.40px;top:629px;font-size:13px;color:#000;-webkit-text-stroke:0.25px #000;transform:scaleX(0.9608);">2005754</div>
<div class="t" style="left:351.80px;top:629px;font-size:13px;color:#000;-webkit-text-stroke:0.25px #000;transform:scaleX(0.9774);">214.805.148-29</div>
<div class="t" style="left:477.80px;top:629px;font-size:13px;color:#000;-webkit-text-stroke:0.25px #000;transform:scaleX(0.9397);">DIOGO VALERIO DUTRA</div>
<div class="t" style="left:888.76px;top:629px;font-size:13px;color:#000;-webkit-text-stroke:0.25px #000;transform:scaleX(0.9711);">3288,04</div>
<div class="t" style="left:951.76px;top:629px;font-size:13px;color:#000;-webkit-text-stroke:0.25px #000;transform:scaleX(0.9749);">180,8422</div>
<div class="t" style="left:1069.76px;top:629px;font-size:13px;color:#000;-webkit-text-stroke:0.25px #000;transform:scaleX(0.9711);">3288,04</div>
<div class="t" style="left:1180.40px;top:629px;font-size:13px;color:#000;-webkit-text-stroke:0.25px #000;transform:scaleX(0.8750);">0</div>
<div class="t" style="left:1308.40px;top:629px;font-size:13px;color:#000;-webkit-text-stroke:0.25px #000;transform:scaleX(0.8750);">0</div>
<div class="t" style="left:1380.40px;top:629px;font-size:13px;color:#000;-webkit-text-stroke:0.25px #000;transform:scaleX(0.8750);">0</div>
<div class="t" style="left:1402.50px;top:629px;font-size:13px;color:#000;-webkit-text-stroke:0.25px #000;transform:scaleX(0.9517);">1.00</div>
<div class="t" style="left:1576.40px;top:629px;font-size:13px;color:#000;-webkit-text-stroke:0.25px #000;transform:scaleX(0.8750);">0</div>
<div class="t" style="left:881.60px;top:649px;font-size:13px;color:#000;font-weight:700;transform:scaleX(0.9600);">53038,04</div>
<div class="t" style="left:951.60px;top:649px;font-size:13px;color:#000;font-weight:700;transform:scaleX(0.9600);">361,6844</div>
<div class="t" style="left:1069.60px;top:649px;font-size:13px;color:#000;font-weight:700;transform:scaleX(0.9745);">6576,08</div>
<div class="t" style="left:1180.40px;top:649px;font-size:13px;color:#000;font-weight:700;transform:scaleX(0.8750);">0</div>
<div class="t" style="left:1308.40px;top:649px;font-size:13px;color:#000;font-weight:700;transform:scaleX(0.8750);">0</div>
<div class="t" style="left:1352.40px;top:649px;font-size:13px;color:#000;font-weight:700;transform:scaleX(0.9459);">49750</div>
<div class="t" style="left:1551.60px;top:649px;font-size:13px;color:#000;font-weight:700;transform:scaleX(0.9636);">367,5</div>
<div class="t" style="left:29.80px;top:689px;font-size:13px;color:#000;font-weight:700;transform:scaleX(0.9424);">(89) PAMELA  CRISTINA VIANNA DE PAULA</div>
<div class="t" style="left:29.80px;top:709px;font-size:13px;color:#000;font-weight:700;transform:scaleX(0.9828);">Unidade operacional</div>
<div class="t" style="left:295.80px;top:709px;font-size:13px;color:#000;font-weight:700;transform:scaleX(0.9545);">Pedido</div>
<div class="t" style="left:351.80px;top:709px;font-size:13px;color:#000;font-weight:700;transform:scaleX(0.8937);">CPF/CNPJ</div>
<div class="t" style="left:477.80px;top:709px;font-size:13px;color:#000;font-weight:700;transform:scaleX(0.9591);">Cliente</div>
<div class="t" style="left:840.80px;top:709px;font-size:13px;color:#000;font-weight:700;transform:scaleX(0.9710);">Valor da venda</div>
<div class="t" style="left:940.80px;top:709px;font-size:13px;color:#000;font-weight:700;transform:scaleX(0.8500);">RT</div>
<div class="t" style="left:1010.80px;top:709px;font-size:13px;color:#000;font-weight:700;transform:scaleX(0.9775);">Crédito utilizado</div>
<div class="t" style="left:1121.80px;top:709px;font-size:13px;color:#000;font-weight:700;transform:scaleX(0.9455);">Retenções</div>
<div class="t" style="left:1193.80px;top:709px;font-size:13px;color:#000;font-weight:700;transform:scaleX(0.9434);">Retenções diversas</div>
<div class="t" style="left:1321.80px;top:709px;font-size:13px;color:#000;font-weight:700;transform:scaleX(0.9723);">Valor base</div>
<div class="t" style="left:1393.80px;top:709px;font-size:13px;color:#000;font-weight:700;transform:scaleX(0.8833);">%</div>
<div class="t" style="left:1456.80px;top:709px;font-size:13px;color:#000;font-weight:700;transform:scaleX(0.9306);">Comissão</div>
<div class="t" style="left:29.80px;top:729px;font-size:13px;color:#000;-webkit-text-stroke:0.25px #000;transform:scaleX(0.9627);">(01) MATRIZ</div>
<div class="t" style="left:296.40px;top:729px;font-size:13px;color:#000;-webkit-text-stroke:0.25px #000;transform:scaleX(0.9608);">2005738</div>
<div class="t" style="left:351.80px;top:729px;font-size:13px;color:#000;-webkit-text-stroke:0.25px #000;transform:scaleX(0.9882);">426.411.938-33</div>
<div class="t" style="left:477.80px;top:729px;font-size:13px;color:#000;-webkit-text-stroke:0.25px #000;transform:scaleX(0.9317);">FERNANDO DE MESSIAS LAVRINI</div>
<div class="t" style="left:899.40px;top:729px;font-size:13px;color:#000;-webkit-text-stroke:0.25px #000;transform:scaleX(0.9459);">22500</div>
<div class="t" style="left:997.40px;top:729px;font-size:13px;color:#000;-webkit-text-stroke:0.25px #000;transform:scaleX(0.8750);">0</div>
<div class="t" style="left:1108.40px;top:729px;font-size:13px;color:#000;-webkit-text-stroke:0.25px #000;transform:scaleX(0.8750);">0</div>
<div class="t" style="left:1180.40px;top:729px;font-size:13px;color:#000;-webkit-text-stroke:0.25px #000;transform:scaleX(0.8750);">0</div>
<div class="t" style="left:1308.40px;top:729px;font-size:13px;color:#000;-webkit-text-stroke:0.25px #000;transform:scaleX(0.8750);">0</div>
<div class="t" style="left:1352.40px;top:729px;font-size:13px;color:#000;-webkit-text-stroke:0.25px #000;transform:scaleX(0.9459);">22500</div>
<div class="t" style="left:1402.50px;top:729px;font-size:13px;color:#000;-webkit-text-stroke:0.25px #000;transform:scaleX(0.9517);">0.50</div>
<div class="t" style="left:1551.76px;top:729px;font-size:13px;color:#000;-webkit-text-stroke:0.25px #000;transform:scaleX(0.9889);">112,5</div>
<div class="t" style="left:29.80px;top:749px;font-size:13px;color:#000;-webkit-text-stroke:0.25px #000;transform:scaleX(0.9627);">(01) MATRIZ</div>
<div class="t" style="left:296.40px;top:749px;font-size:13px;color:#000;-webkit-text-stroke:0.25px #000;transform:scaleX(0.9608);">2005744</div>
<div class="t" style="left:351.80px;top:749px;font-size:13px;color:#000;-webkit-text-stroke:0.25px #000;transform:scaleX(0.9774);">163.722.078-26</div>
<div class="t" style="left:477.80px;top:749px;font-size:13px;color:#000;-webkit-text-stroke:0.25px #000;transform:scaleX(0.9469);">JULIANA SAMPAIO TEIXEIRA NATAL</div>
<div class="t" style="left:906.40px;top:749px;font-size:13px;color:#000;-webkit-text-stroke:0.25px #000;transform:scaleX(0.9655);">3934</div>
<div class="t" style="left:965.76px;top:749px;font-size:13px;color:#000;-webkit-text-stroke:0.25px #000;transform:scaleX(0.9661);">432,74</div>
<div class="t" style="left:1108.40px;top:749px;font-size:13px;color:#000;-webkit-text-stroke:0.25px #000;transform:scaleX(0.8750);">0</div>
<div class="t" style="left:1180.40px;top:749px;font-size:13px;color:#000;-webkit-text-stroke:0.25px #000;transform:scaleX(0.8750);">0</div>
<div class="t" style="left:1308.40px;top:749px;font-size:13px;color:#000;-webkit-text-stroke:0.25px #000;transform:scaleX(0.8750);">0</div>
<div class="t" style="left:1341.76px;top:749px;font-size:13px;color:#000;-webkit-text-stroke:0.25px #000;transform:scaleX(0.9711);">3501,26</div>
<div class="t" style="left:1393.80px;top:749px;font-size:13px;color:#000;-webkit-text-stroke:0.25px #000;">0.50/1.00</div>
<div class="t" style="left:1537.76px;top:749px;font-size:13px;color:#000;-webkit-text-stroke:0.25px #000;transform:scaleX(0.9711);">17,5126</div>
<div class="t" style="left:29.80px;top:789px;font-size:13px;color:#000;-webkit-text-stroke:0.25px #000;transform:scaleX(0.9627);">(01) MATRIZ</div>
<div class="t" style="left:296.40px;top:789px;font-size:13px;color:#000;-webkit-text-stroke:0.25px #000;transform:scaleX(0.9608);">2005755</div>
<div class="t" style="left:351.80px;top:789px;font-size:13px;color:#000;-webkit-text-stroke:0.25px #000;transform:scaleX(0.9774);">429.784.728-04</div>
<div class="t" style="left:477.80px;top:789px;font-size:13px;color:#000;-webkit-text-stroke:0.25px #000;transform:scaleX(0.9487);">GABRIELLA MARRANGHELLO MINGIONE</div>
<div class="t" style="left:888.76px;top:789px;font-size:13px;color:#000;-webkit-text-stroke:0.25px #000;transform:scaleX(0.9711);">2194,93</div>
<div class="t" style="left:944.76px;top:789px;font-size:13px;color:#000;-webkit-text-stroke:0.25px #000;transform:scaleX(0.9620);">164,61975</div>
<div class="t" style="left:1069.76px;top:789px;font-size:13px;color:#000;-webkit-text-stroke:0.25px #000;transform:scaleX(0.9711);">2194,93</div>
<div class="t" style="left:1180.40px;top:789px;font-size:13px;color:#000;-webkit-text-stroke:0.25px #000;transform:scaleX(0.8750);">0</div>
<div class="t" style="left:1308.40px;top:789px;font-size:13px;color:#000;-webkit-text-stroke:0.25px #000;transform:scaleX(0.8750);">0</div>
<div class="t" style="left:1380.40px;top:789px;font-size:13px;color:#000;-webkit-text-stroke:0.25px #000;transform:scaleX(0.8750);">0</div>
<div class="t" style="left:1402.50px;top:789px;font-size:13px;color:#000;-webkit-text-stroke:0.25px #000;transform:scaleX(0.9517);">1.00</div>
<div class="t" style="left:1576.40px;top:789px;font-size:13px;color:#000;-webkit-text-stroke:0.25px #000;transform:scaleX(0.8750);">0</div>
<div class="t" style="left:881.60px;top:809px;font-size:13px;color:#000;font-weight:700;transform:scaleX(0.9600);">28628,93</div>
<div class="t" style="left:951.60px;top:809px;font-size:13px;color:#000;font-weight:700;transform:scaleX(0.9600);">761,9795</div>
<div class="t" style="left:1069.60px;top:809px;font-size:13px;color:#000;font-weight:700;transform:scaleX(0.9745);">4389,86</div>
<div class="t" style="left:1180.40px;top:809px;font-size:13px;color:#000;font-weight:700;transform:scaleX(0.8750);">0</div>
<div class="t" style="left:1308.40px;top:809px;font-size:13px;color:#000;font-weight:700;transform:scaleX(0.8750);">0</div>
<div class="t" style="left:1334.60px;top:809px;font-size:13px;color:#000;font-weight:700;transform:scaleX(0.9600);">26001,26</div>
<div class="t" style="left:1530.60px;top:809px;font-size:13px;color:#000;font-weight:700;transform:scaleX(0.9600);">130,0126</div>
<div class="t" style="left:29.80px;top:849px;font-size:13px;color:#000;font-weight:700;transform:scaleX(0.9234);">(90) PAMELA SUELEN BRAMBILLA</div>
<div class="t" style="left:29.40px;top:589px;font-size:13px;color:#e8452f;font-style:italic;transform:scaleX(1.0093);">Meta atingida: Pedido 2005745, foi calculado 0.50% no valor de R$ 3.500,00 e 1.00% no valor de R$ 19.750,00</div>
<div class="t" style="left:29.40px;top:769px;font-size:13px;color:#e8452f;font-style:italic;transform:scaleX(1.0129);">Meta atingida: Pedido 2005744, foi calculado 0.50% no valor de R$ 3.500,00 e 1.00% no valor de R$ 1,26</div>
<div class="b" style="left:80px;top:298px;width:2px;height:2px;background:#000"></div>
<div class="b" style="left:82px;top:290px;width:47px;height:11px;background:linear-gradient(90deg,#e9e7e6,#efeeed)"></div>
<div class="b" style="left:1881px;top:257px;width:1px;height:610px;background:#ababab"></div>
<div class="b" style="left:1713px;top:503px;width:67px;height:23px;border:2px solid #217346"></div>
<div class="b" style="left:1775px;top:521px;width:7px;height:7px;background:#fff"></div>
<div class="b" style="left:1776px;top:522px;width:5px;height:5px;background:#217346"></div>
<div class="b" style="left:1882px;top:237px;width:21px;height:631px;background:#e6e6e6"></div>
<div class="b" style="left:1885px;top:255px;width:15px;height:612px;background:#dadada"></div>
<div class="b" style="left:1885px;top:239px;width:15px;height:15px;background:#fff;border:1px solid #c6c6c6"></div>
<svg class="b" style="left:1889px;top:244px" width="7" height="4" viewBox="0 0 7 4"><path d="M0 4h7L3.5 0z" fill="#777"/></svg>
<div class="b" style="left:1885px;top:254px;width:15px;height:260px;background:#fff;border:1px solid #a6a6a6"></div>
<div class="b" style="left:1885px;top:853px;width:15px;height:15px;background:#fff;border:1px solid #c6c6c6"></div>
<svg class="b" style="left:1889px;top:859px" width="7" height="4" viewBox="0 0 7 4"><path d="M0 0h7L3.5 4z" fill="#777"/></svg>
<div class="b" style="left:1px;top:867px;width:1881px;height:1px;background:#ababab"></div>
<div class="b" style="left:0px;top:868px;width:1904px;height:27px;background:#e6e6e6"></div>
<svg class="b" style="left:27px;top:876px" width="5" height="9" viewBox="0 0 5 9"><path d="M5 0v9L0 4.5z" fill="#c4c4c4"/></svg>
<svg class="b" style="left:56px;top:876px" width="5" height="9" viewBox="0 0 5 9"><path d="M0 0v9l5-4.5z" fill="#c4c4c4"/></svg>
<div class="b" style="left:101px;top:867px;width:65px;height:25px;background:#fff;border-left:1px solid #ababab;border-right:1px solid #ababab"></div>
<div class="b" style="left:101px;top:890px;width:65px;height:2px;background:#217346"></div>
<div class="t" style="left:113.00px;top:875px;font-size:12.4px;color:#217346;font-weight:700;transform:scaleX(0.9756);">Sheet1</div>
<svg class="b" style="left:198px;top:872px" width="18" height="18" viewBox="0 0 18 18"><circle cx="9" cy="9" r="7.5" fill="none" stroke="#777" stroke-width="1.1"/><path d="M9 5v8M5 9h8" stroke="#777" stroke-width="1.5"/></svg>
<div class="b" style="left:1142px;top:876px;width:2px;height:2px;background:#9a9a9a"></div>
<div class="b" style="left:1142px;top:880px;width:2px;height:2px;background:#9a9a9a"></div>
<div class="b" style="left:1142px;top:884px;width:2px;height:2px;background:#9a9a9a"></div>
<div class="b" style="left:1159px;top:874px;width:723px;height:15px;background:#fff;border:1px solid #a6a6a6"></div>
<svg class="b" style="left:1164px;top:878px" width="5" height="8" viewBox="0 0 5 8"><path d="M5 0v8L0 4z" fill="#777"/></svg>
<div class="b" style="left:1173px;top:875px;width:2px;height:13px;background:#a6a6a6"></div>
<div class="b" style="left:1823px;top:874px;width:44px;height:15px;background:#dadada"></div>
<div class="b" style="left:1867px;top:874px;width:15px;height:15px;background:#fff;border:1px solid #c6c6c6"></div>
<svg class="b" style="left:1873px;top:878px" width="5" height="8" viewBox="0 0 5 8"><path d="M0 0v8l5-4z" fill="#777"/></svg>
<div class="b" style="left:0px;top:896px;width:1904px;height:22px;background:#f1f1f1"></div>
<div class="b" style="left:1px;top:895px;width:1902px;height:1px;background:#d5d5d5"></div>
<div class="t" style="left:8.50px;top:900px;font-size:12.5px;color:#444;transform:scaleX(0.9054);">Pronto</div>
<div class="b" style="left:1600px;top:896px;width:38px;height:21px;background:#c8c8c8"></div>
<svg class="b" style="left:1611px;top:898px" width="15" height="15" viewBox="0 0 15 15"><path d="M1 1h13v13H1zM5.5 1v13M9.5 1v13M1 5.5h13M1 9.5h13" fill="none" stroke="#666" stroke-width="1.2"/></svg>
<svg class="b" style="left:1649px;top:898px" width="15" height="15" viewBox="0 0 15 15"><rect x="0.5" y="0.5" width="14" height="14" fill="none" stroke="#666" stroke-width="1.2"/><rect x="3.5" y="3.5" width="8" height="8" fill="none" stroke="#666"/><path d="M5.5 6h4M5.5 8h4M5.5 10h4" stroke="#666"/></svg>
<svg class="b" style="left:1687px;top:898px" width="15" height="15" viewBox="0 0 15 15"><path d="M0.5 14.5V0.5h14v14M4.5 0.5v5M7.5 0.5v5h7" fill="none" stroke="#666"/></svg>
<div class="b" style="left:1719px;top:905px;width:6px;height:2px;background:#555"></div>
<div class="b" style="left:1729px;top:905px;width:100px;height:1px;background:#aaa"></div>
<div class="b" style="left:1777px;top:900px;width:4px;height:11px;background:#555"></div>
<div class="b" style="left:1833px;top:905px;width:8px;height:2px;background:#555"></div>
<div class="b" style="left:1836px;top:902px;width:2px;height:8px;background:#555"></div>
<div class="t" style="left:1856.90px;top:900px;font-size:12.5px;color:#444;transform:scaleX(0.8094);">100%</div>
<div class="b" style="left:0px;top:58px;width:1px;height:860px;background:#217346"></div>
<div class="b" style="left:1903px;top:58px;width:1px;height:860px;background:#217346"></div>
<div class="b" style="left:0px;top:917px;width:1904px;height:1px;background:#217346"></div>
</body></html>
